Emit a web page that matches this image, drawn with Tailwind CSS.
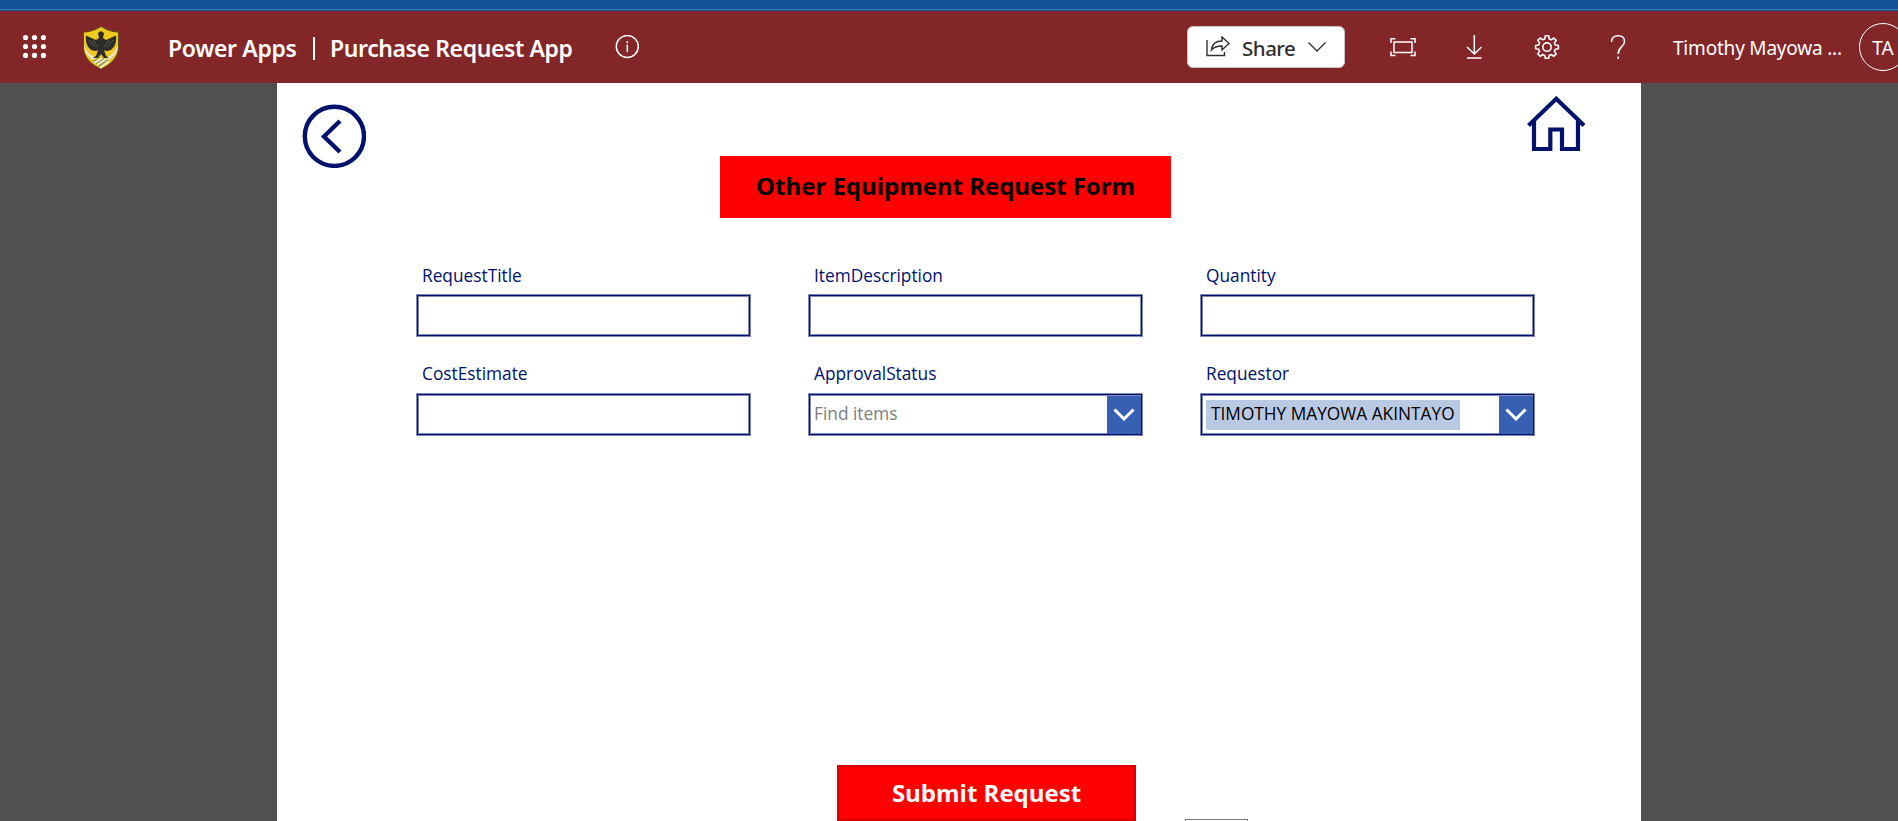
<!DOCTYPE html>
<html lang="en">
<head>
<meta charset="utf-8">
<title>Purchase Request App</title>
<script src="https://cdn.jsdelivr.net/npm/@tailwindcss/browser@4"></script>
</head>
<body class="flex h-[821px] w-[1898px] flex-col overflow-hidden bg-[#505050] font-['Open_Sans',sans-serif]">
<div class="flex h-[11px] shrink-0 flex-col bg-[#135396] pt-[9px]"><div class="h-px bg-[#3579bd]"></div></div>
<header class="flex h-[72px] w-[1898px] shrink-0 items-start overflow-hidden bg-[#832628] pr-0 pl-[22px] font-['Noto_Sans',sans-serif] text-white">
  <svg class="mt-[23px] h-6 w-6 shrink-0" viewBox="0 0 24 24" fill="currentColor"><circle cx="3.5" cy="3.5" r="2.6"/><circle cx="12.5" cy="3.5" r="2.6"/><circle cx="21.4" cy="3.5" r="2.6"/><circle cx="3.5" cy="12.5" r="2.6"/><circle cx="12.5" cy="12.5" r="2.6"/><circle cx="21.4" cy="12.5" r="2.6"/><circle cx="3.5" cy="21.4" r="2.6"/><circle cx="12.5" cy="21.4" r="2.6"/><circle cx="21.4" cy="21.4" r="2.6"/></svg>
  <svg class="mt-[14px] ml-9 h-[46px] w-[38px] shrink-0" viewBox="0 0 38 46">
    <path d="M1.500 7C8 7 13 5 19 1.500C25 5 30 7 36.500 7V23C36 33 28 40 19 44C10 40 2 33 1.500 23Z" fill="#efca1e" stroke="#5d4a18" stroke-width="1"/>
    <path d="M2 20C5 28 10 31 14 33L11 35C6 31 2 27 2 20ZM36 20C33 28 28 31 24 33L27 35C32 31 36 27 36 20Z" fill="#e9e5dc"/>
    <path d="M19 6L22 8L21 13L24 15L34 10.500C35 18 32 26 24 26L22 25L24 31L27 33H22L19 29L16 33H11L14 31L16 25L14 26C6 26 3 18 4 10.500L14 15L17 13L16 8Z" fill="#2d2c28"/>
    <path d="M7 15L13 22M11 15L16 22M31 15L25 22M27 15L22 22" stroke="#5e5c50" stroke-width="1"/>
    <path d="M10 36L19 32L28 36L19 43Z" fill="#a99c3c"/>
    <path d="M12 38L20 33M15 40L24 34M18 43L27 36" stroke="#f4f0dc" stroke-width="1.800"/>
  </svg>
  <div class="mt-[21px] ml-[48px] flex h-8 w-[447px] shrink-0 items-center text-[23px] leading-8 font-semibold whitespace-nowrap">
    <span class="w-[145px] tracking-[-0.35px]">Power Apps</span>
    <span class="mr-[15px] h-[23px] w-[2px] bg-white"></span>
    <span class="tracking-[-0.4px]">Purchase Request App</span>
  </div>
  <svg class="mt-6 h-6 w-6 shrink-0" viewBox="0 0 24 24" fill="none" stroke="currentColor" stroke-width="1.500"><circle cx="12.300" cy="11.500" r="11"/><path d="M12.300 9.500V17M12.300 6V8"/></svg>
  <div class="mt-[15px] ml-[548px] flex h-[42px] w-[158px] shrink-0 items-center rounded-md border border-[#c9c4c4] bg-white pl-[18px] text-[#303030]">
    <svg class="h-6 w-6 shrink-0" viewBox="0 0 24 24" fill="none" stroke="currentColor" stroke-width="1.400"><path d="M1 5V20.500H18.500V17M16 2L23 8.500L16 15V11C11 11 8 12 5.500 15C6 9 10 6 16 6Z"/></svg>
    <span class="relative top-px ml-[12px] w-[54px] text-[20.500px] font-medium tracking-[-0.5px] whitespace-nowrap">Share</span>
    <svg class="ml-3 h-[10px] w-[18px] shrink-0" viewBox="0 0 18 10" fill="none" stroke="currentColor" stroke-width="1.300"><path d="M.5 .5L9 9L17.500 .5"/></svg>
  </div>
  <svg class="mt-[27px] ml-[45px] h-[19px] w-[26px] shrink-0" viewBox="0 0 26 19" fill="none" stroke="currentColor" stroke-width="1.500"><path d="M5.500 .8H1V5M20.500 .8H25V5M1 13.500V17.500H5.500M25 13.500V17.500H20.500M4 4H22V14.500H4Z"/></svg>
  <svg class="mt-6 ml-[50px] h-6 w-4 shrink-0" viewBox="0 0 16 24" fill="none" stroke="currentColor" stroke-width="1.500"><path d="M8.300 0V19M1 12L8.300 19L15.500 12M1 23H15.500"/></svg>
  <svg class="mt-6 ml-[52px] h-6 w-[26px] shrink-0" viewBox="0 0 26 24" fill="none" stroke="currentColor" stroke-width="1.600" stroke-linejoin="round"><path d="M11.300 .8H14.700L15.200 3.900L17.300 4.800L19.800 3L22.200 5.400L20.400 7.900L21.300 10L24.400 10.500V13.800L21.300 14.300L20.400 16.400L22.200 18.900L19.800 21.300L17.300 19.500L15.200 20.400L14.700 23.400H11.300L10.800 20.400L8.700 19.500L6.200 21.300L3.800 18.900L5.600 16.400L4.700 14.300L1.600 13.800V10.500L4.700 10L5.600 7.900L3.800 5.400L6.200 3L8.700 4.800L10.800 3.900Z"/><circle cx="13" cy="12.100" r="4.200"/></svg>
  <svg class="mt-6 ml-[50px] h-6 w-4 shrink-0" viewBox="0 0 16 24" fill="none" stroke="currentColor" stroke-width="1.500"><path d="M1.500 7C1.500 3 4 .8 8 .8C12 .8 14.500 3 14.500 6.500C14.500 12 8.200 11.500 8.200 19M8.200 21.500V24"/></svg>
  <span class="mt-[22px] ml-[47px] w-[186px] shrink-0 text-[19px] leading-[30px] tracking-[-0.2px] whitespace-nowrap">Timothy Mayowa ...</span>
  <div class="mt-[12px] flex h-12 w-12 shrink-0 items-center justify-center rounded-full border border-white pt-0.5 text-[19px]">TA</div>
</header>
<main class="mx-[277px] flex w-[1364px] grow flex-col overflow-hidden bg-white">
  <div class="flex h-[73px] shrink-0 items-start justify-between pr-[54px] pl-[25px]">
    <svg class="mt-[21px] h-16 w-16 shrink-0" viewBox="0 0 64 64" fill="none" stroke="#00126b" stroke-width="4.400"><circle cx="32.400" cy="32.300" r="29.600"/><path d="M38 17L22 32.500L38 48"/></svg>
    <svg class="mt-[13px] h-[56px] w-[60px] shrink-0" viewBox="0 0 60 56" fill="none" stroke="#00126b" stroke-width="4.200"><path d="M1.500 29.500L29.300 2.800L57 29.500"/><path d="M7 25V53H23.300V33.500H35V53H51V25"/></svg>
  </div>
  <h1 class="ml-[443px] flex h-[62px] w-[451px] shrink-0 items-center justify-center bg-[#ff0000] pb-0.5 text-[24px] font-bold tracking-[-0.03px] text-black">Other Equipment Request Form</h1>
  <form class="mt-[42px] ml-[139px] grid w-[1120px] grid-cols-[335px_335px_335px] gap-x-[57px] text-[17.300px] text-[#00126b]">
    <label class="flex h-[98px] flex-col"><span class="h-[34px] pl-[6px] leading-[31px]">RequestTitle</span><span class="h-[43px] border border-[#00126b]/50 shadow-[inset_0_0_0_1px_#00126b,inset_0_0_0_2px_#00126b80]"></span></label>
    <label class="flex h-[98px] flex-col"><span class="h-[34px] pl-[6px] leading-[31px]">ItemDescription</span><span class="h-[43px] border border-[#00126b]/50 shadow-[inset_0_0_0_1px_#00126b,inset_0_0_0_2px_#00126b80]"></span></label>
    <label class="flex h-[98px] flex-col"><span class="h-[34px] pl-[6px] leading-[31px]">Quantity</span><span class="h-[43px] border border-[#00126b]/50 shadow-[inset_0_0_0_1px_#00126b,inset_0_0_0_2px_#00126b80]"></span></label>
    <label class="flex h-[98px] flex-col"><span class="h-[35px] pl-[6px] leading-[31px]">CostEstimate</span><span class="h-[43px] border border-[#00126b]/50 shadow-[inset_0_0_0_1px_#00126b,inset_0_0_0_2px_#00126b80]"></span></label>
    <label class="flex h-[98px] flex-col"><span class="h-[35px] pl-[6px] leading-[31px]">ApprovalStatus</span>
      <span class="flex h-[43px] items-center justify-between border border-[#00126b]/50 pr-px pl-[5px] text-[#7d7d7d] shadow-[inset_0_0_0_1px_#00126b,inset_0_0_0_2px_#00126b80]"><span class="pb-px">Find items</span>
        <span class="flex h-[38px] w-[34px] items-center justify-center bg-[#3860b2]"><svg class="h-[14px] w-[22px]" viewBox="0 0 22 14" fill="none" stroke="white" stroke-width="3"><path d="M1.500 1.500L11 11L20.500 1.500"/></svg></span></span></label>
    <label class="flex h-[98px] flex-col"><span class="h-[35px] pl-[6px] leading-[31px]">Requestor</span>
      <span class="flex h-[43px] items-center justify-between border border-[#00126b]/50 pr-px pl-[5px] text-black shadow-[inset_0_0_0_1px_#00126b,inset_0_0_0_2px_#00126b80]"><span class="flex h-[30px] w-[254px] items-center bg-[#bac9e3] pb-px pl-[5px] whitespace-nowrap">TIMOTHY MAYOWA AKINTAYO</span>
        <span class="flex h-[38px] w-[34px] items-center justify-center bg-[#3860b2]"><svg class="h-[14px] w-[22px]" viewBox="0 0 22 14" fill="none" stroke="white" stroke-width="3"><path d="M1.500 1.500L11 11L20.500 1.500"/></svg></span></span></label>
  </form>
  <div class="mt-auto flex h-[56px] shrink-0 items-end pl-[560px]">
    <button class="h-[56px] w-[299px] border-2 border-[#d90000] bg-[#ff0000] text-[24px] font-bold text-white">Submit Request</button>
    <div class="ml-[49px] h-[2px] w-[63px] border border-b-0 border-[#777777]"></div>
  </div>
</main>
</body>
</html>
